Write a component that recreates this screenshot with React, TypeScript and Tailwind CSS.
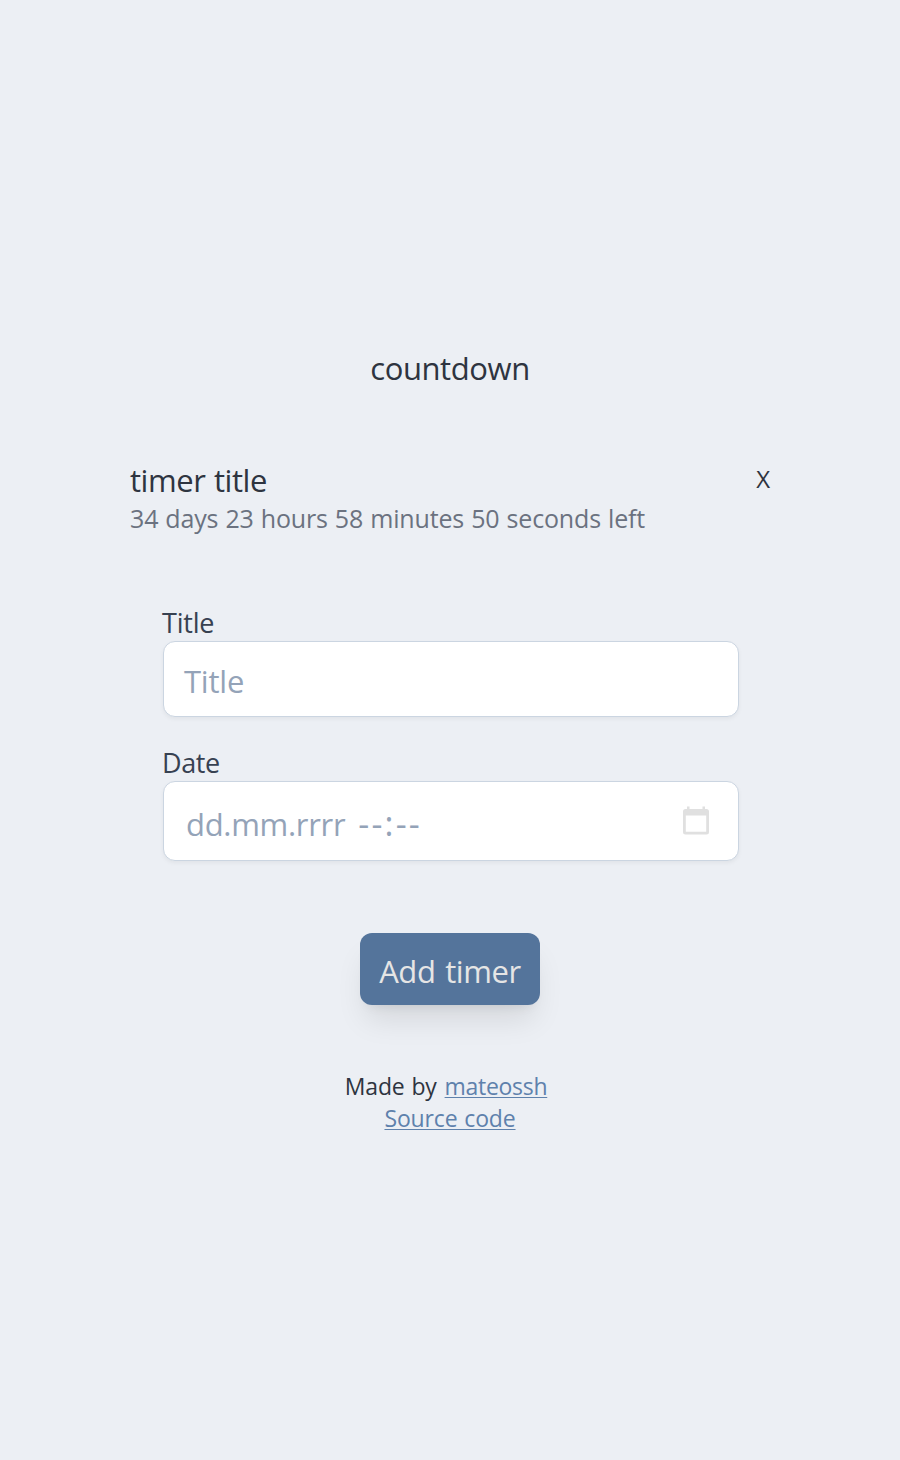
import React from "react";

function CalendarIcon() {
  return (
    <svg className="h-[30px] w-[26px]" viewBox="0 0 26 30" fill="#e0e0e0" aria-hidden="true">
      <path
        fillRule="evenodd"
        d="M4 0.5h2.5V3h13V0.5H22V3h1.5a2.5 2.5 0 0 1 2.5 2.5v20.5a2.5 2.5 0 0 1-2.5 2.5H2.5a2.5 2.5 0 0 1-2.5-2.5V5.5a2.5 2.5 0 0 1 2.5-2.5h1.5zM2.8 9.5v16.2h20.4V9.5z"
      />
    </svg>
  );
}

function Timer() {
  return (
    <section className="mt-[72px] flex w-[640px] justify-between">
      <div>
        <h2 className="h-[40px] text-[31px] leading-[40px] tracking-[-0.45px] [word-spacing:1px] whitespace-nowrap">
          timer title
        </h2>
        <p className="h-[36px] text-[25px] leading-[36px] tracking-[-0.15px] [word-spacing:0.7px] whitespace-nowrap text-[#6b7280]">
          34 days 23 hours 58 minutes 50 seconds left
        </p>
      </div>
      <button className="h-[38px] text-[24px] leading-[38px]">X</button>
    </section>
  );
}

export default function App() {
  return (
    <main className="flex h-[1460px] w-[900px] flex-col items-center bg-[#eceff4] font-['Open_Sans',sans-serif] text-[#2e3440]">
      <h1 className="mt-[348px] h-[40px] text-[31px] leading-[40px] tracking-[-0.4px] whitespace-nowrap">countdown</h1>
      <Timer />
      <form className="mt-[69px] flex w-[576px] flex-col" onSubmit={(e) => e.preventDefault()}>
        <label className="h-[36px] text-[27px] leading-[35px] tracking-[-0.2px] text-[#374151]">Title</label>
        <div className="ml-px -mr-px flex h-[76px] items-center rounded-xl border-[1.5px] border-[#cbd5e1] bg-white px-[20px] pt-[3px] shadow-[0_2px_4px_rgba(0,0,0,0.05)]">
          <span className="text-[31px] leading-[48px] tracking-[-0.2px] text-[#94a3b8]">Title</span>
        </div>
        <label className="mt-[28px] h-[36px] text-[27px] leading-[35px] tracking-[-0.4px] text-[#374151]">Date</label>
        <div className="ml-px -mr-px flex h-[80px] items-center justify-between rounded-xl border-[1.5px] border-[#cbd5e1] bg-white pr-[29px] pl-[22px] shadow-[0_2px_4px_rgba(0,0,0,0.05)]">
          <span className="flex items-baseline gap-[13px] pt-[4px] text-[31px] leading-[48px] text-[#94a3b8]">
            <span className="tracking-[-0.3px]">dd.mm.rrrr</span>
            <span className="text-[34px] tracking-[2.2px]">--:--</span>
          </span>
          <CalendarIcon />
        </div>
        <button className="mt-[72px] h-[72px] w-[180px] self-center rounded-xl bg-[#54749b] pt-[1px] text-[31px] leading-[74px] font-medium tracking-[-0.4px] [word-spacing:2px] whitespace-nowrap text-[#e5e5e5] shadow-[0_20px_30px_-6px_rgba(0,0,0,0.1),0_8px_12px_-8px_rgba(0,0,0,0.1)]">
          Add timer
        </button>
      </form>
      <footer className="mt-[65px] flex flex-col items-center text-[23px] leading-[32px]">
        <p className="mr-[8px] tracking-[-0.15px] [word-spacing:1px] whitespace-nowrap">
          Made by{" "}
          <a className="ml-px tracking-[-0.3px] text-[#5e81ac] underline decoration-1 underline-offset-[2px]">
            mateossh
          </a>
        </p>
        <a className="tracking-[-0.15px] [word-spacing:1px] whitespace-nowrap text-[#5e81ac] underline decoration-1 underline-offset-[2px]">
          Source code
        </a>
      </footer>
    </main>
  );
}
